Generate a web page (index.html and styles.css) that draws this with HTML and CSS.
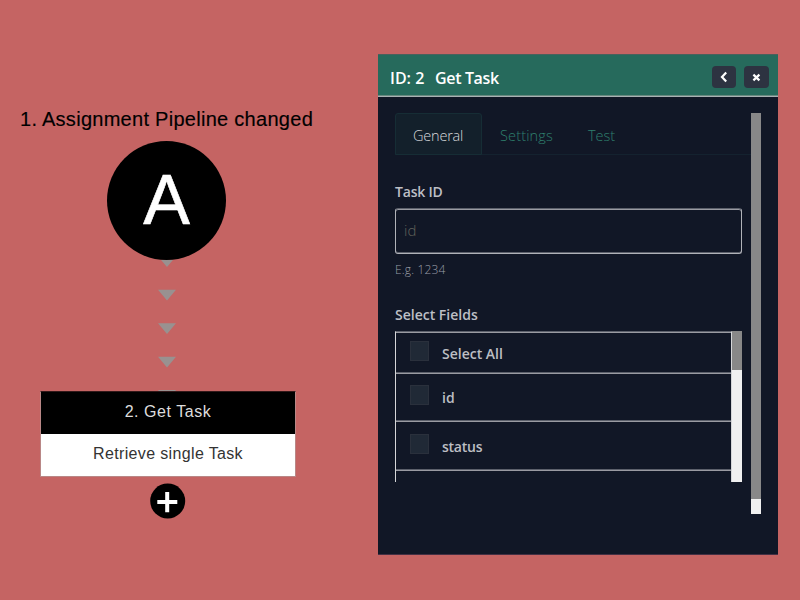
FILE: index.html
```
<!DOCTYPE html>
<html lang="en">
<head>
<meta charset="utf-8">
<title>Pipeline</title>
<link rel="stylesheet" href="styles.css">
</head>
<body>
<main class="app">
  <section class="flow">
    <h1 class="flow-title"><span>1. Assignment Pipeline changed</span></h1>
    <div class="trigger"><span>A</span></div>
    <svg class="arrows" width="18" height="131" viewBox="0 0 18 131">
      <path d="M0 -3.6H18L9 7zM0 29.8H18L9 40.6zM0 63.2H18L9 74zM0 96.8H18L9 107.6zM0 130H18L9 141z"/>
    </svg>
    <div class="step">
      <div class="step-head"><span>2. Get Task</span></div>
      <div class="step-body"><span>Retrieve single Task</span></div>
    </div>
    <svg class="add" width="36" height="36" viewBox="0 0 36 36">
      <circle cx="17.7" cy="18" r="17.5"/>
      <path d="M7.3 19H27.3M17.2 9V29.2"/>
    </svg>
  </section>
  <section class="panel">
    <header class="panel-head">
      <h2><span class="step-id">ID: 2</span><span class="step-name">Get Task</span></h2>
      <button class="btn"><svg width="24" height="22" viewBox="0 0 24 22"><path d="M14.2 6.6L10 11L14.2 15.4"/></svg></button>
      <button class="btn close"><svg width="25" height="22" viewBox="0 0 25 22"><path d="M9.4 8.6L15.4 14.4M15.4 8.6L9.4 14.4"/></svg></button>
    </header>
    <div class="content">
      <div class="form">
        <nav class="tabs">
          <a class="tab active"><span>General</span></a>
          <a class="tab settings"><span>Settings</span></a>
          <a class="tab test"><span>Test</span></a>
        </nav>
        <label class="label task-label"><span>Task ID</span></label>
        <div class="input"><span>id</span></div>
        <p class="hint"><span>E.g. 1234</span></p>
        <label class="label fields-label"><span>Select Fields</span></label>
        <div class="fields">
          <div class="list">
            <div class="row first"><i class="check"></i><span>Select All</span></div>
            <div class="row second"><i class="check"></i><span>id</span></div>
            <div class="row third"><i class="check"></i><span>status</span></div>
          </div>
          <div class="scroll inner"><div class="thumb"></div></div>
        </div>
      </div>
      <div class="scroll outer"><div class="thumb"></div></div>
    </div>
  </section>
</main>
</body>
</html>
```
FILE: styles.css
```
* { box-sizing: border-box; }
body {
  margin: 0;
  width: 800px;
  height: 600px;
  overflow: hidden;
  background: #c56463;
  font-family: "Open Sans", "Noto Sans", sans-serif;
}
h1, h2, p { margin: 0; font-weight: 400; }
span { white-space: pre; }
.app { display: flex; height: 600px; }

.flow {
  width: 378px;
  padding: 106px 0 0 20px;
  font-family: "Liberation Sans", Arial, sans-serif;
}
.flow-title { height: 35px; font-size: 20px; line-height: 27px; letter-spacing: 0.28px; color: #000; -webkit-text-stroke: 0.15px #000; }
.trigger {
  width: 119px;
  height: 119px;
  margin-left: 87px;
  border-radius: 50%;
  background: #000;
  color: #fff;
  font-size: 70px;
  line-height: 118px;
  text-align: center;
}
.trigger span { -webkit-text-stroke: 0.6px #fff; }
.arrows { display: block; margin: 0 0 0 138px; fill: #999190; }
.step { width: 256px; height: 86px; margin: 0 0 0 20px; border: 1px solid #b98786; border-top-color: #33191a; font-size: 16px; text-align: center; }
.step-head { height: 42px; line-height: 39px; background: #000; color: #ddd; letter-spacing: 0.55px; }
.step-body { height: 42px; line-height: 39px; background: #fff; color: #333; letter-spacing: 0.35px; }
.add { display: block; margin: 6px 0 0 130px; }
.add path { stroke: #fff; stroke-width: 4; }

.panel { width: 400px; height: 501px; margin-top: 54px; background: #111726; border-bottom: 1px solid #453044; }
.panel-head {
  display: flex;
  height: 43px;
  padding: 12px 9px 0 12px;
  border-top: 1px solid #4a605c;
  border-bottom: 1px solid #a9b1b3;
  box-shadow: inset 0 -1px #66897f;
  background: #266a5c;
}
.panel-head h2 { flex: 1; display: flex; font-size: 16px; line-height: 22px; font-weight: 600; color: #fff; }
.step-id { width: 45px; }
.step-name { letter-spacing: -0.35px; }
.btn { width: 24px; height: 22px; margin: -1px 8px 0 0; padding: 0; border: 0; border-radius: 4px; background: #2d3341; }
.btn.close { width: 25px; margin-right: 0; }
.btn svg { display: block; fill: none; stroke: #fff; stroke-width: 2.2; }
.content { display: flex; padding: 16px 0 0 17px; }
.form { width: 356px; }
.tabs { display: flex; height: 42px; border-bottom: 1px solid #14222f; font-size: 14.5px; line-height: 44px; color: #2f806e; font-weight: 300; }
.tab.active { width: 87px; height: 42px; padding-left: 17px; border: 1px solid #162d35; border-radius: 3px 3px 0 0; background: #13202b; color: #d8dadc; letter-spacing: -0.2px; }
.settings { width: 88px; padding: 1px 0 0 18px; letter-spacing: 0.15px; }
.test { padding: 1px 0 0 18px; }
.label { display: block; font-size: 14px; line-height: 20px; font-weight: 600; color: #bdbfc5; }
.task-label { margin-top: 27px; letter-spacing: -0.2px; }
.input {
  width: 347px;
  height: 46px;
  margin-top: 6px;
  padding-left: 8px;
  border: 1px solid #b0b2b8;
  border-top-color: #5c606b;
  border-radius: 3px;
  box-shadow: inset 0 1px #9a9ba2, inset 0 -1px #5c606b;
  font-size: 15px;
  line-height: 43px;
  font-weight: 300;
  color: #62625a;
}
.hint { margin-top: 6px; font-size: 12px; line-height: 20px; font-weight: 300; color: #9a9ea6; letter-spacing: 0.15px; }
.fields-label { margin-top: 25px; }
.fields { display: flex; width: 347px; height: 151px; margin-top: 6px; }
.list { width: 337px; border: 1px solid #d5d6d8; border-bottom: 0; border-top-color: #5c606b; overflow: hidden; }
.row { display: flex; align-items: flex-start; padding-left: 14px; border-bottom: 1px solid #9a9ba2; box-shadow: inset 0 -1px #5c606b; font-size: 14px; font-weight: 600; color: #bcbec3; }
.row span { margin-top: 1px; line-height: 20px; }
.check { width: 19px; height: 20px; margin: -2px 13px 0 0; border: 1px solid #2a303c; background: #202936; }
.first { height: 42px; padding-top: 11px; border-top: 1px solid #9a9ba2; }
.first .check { margin-top: -3px; }
.first span { margin-top: 0; }
.second { height: 48px; padding-top: 13px; }
.third { height: 49px; padding-top: 14px; letter-spacing: -0.25px; }
.scroll { width: 10px; background: #f0f0f0; }
.scroll .thumb { background: #888; }
.inner .thumb { height: 39px; }
.outer { height: 401px; }
.outer .thumb { height: 386px; }
```
